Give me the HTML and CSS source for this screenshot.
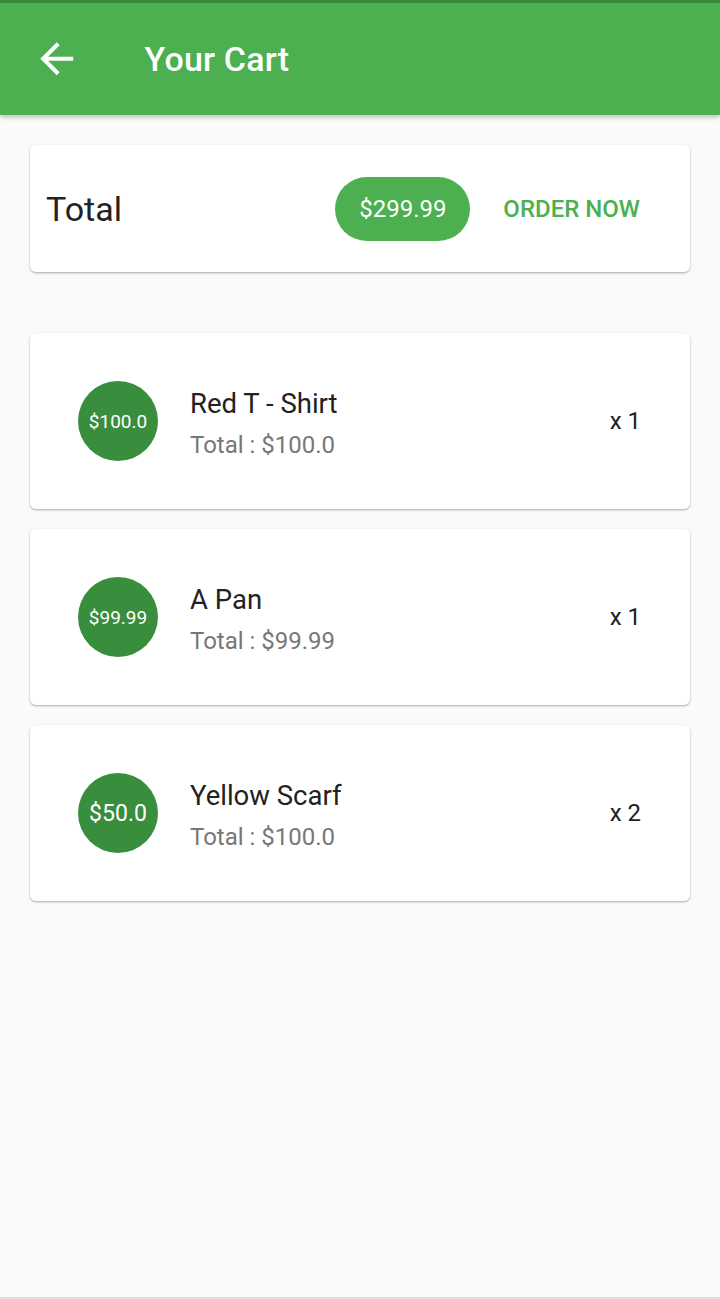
FILE: index.html
```html
<!DOCTYPE html>
<html lang="en">
<head>
<meta charset="utf-8">
<title>Your Cart</title>
<link rel="stylesheet" href="styles.css">
</head>
<body>
<div class="page">
  <div class="status-line"></div>
  <header class="appbar">
    <svg class="back" viewBox="0 0 24 24" aria-hidden="true">
      <path d="M20 11H7.83l5.59-5.59L12 4l-8 8 8 8 1.41-1.41L7.83 13H20v-2z" fill="#fff"/>
    </svg>
    <h1 class="title">Your Cart</h1>
  </header>
  <main class="content">
    <section class="card total-card">
      <span class="total-label">Total</span>
      <span class="chip">$299.99</span>
      <button class="order-btn">ORDER NOW</button>
    </section>

    <ul class="items">
      <li class="card item">
        <div class="avatar"><span class="avatar-text size-6">$100.0</span></div>
        <div class="item-info">
          <div class="item-title">Red T - Shirt</div>
          <div class="item-sub">Total : $100.0</div>
        </div>
        <div class="qty">x 1</div>
      </li>
      <li class="card item">
        <div class="avatar"><span class="avatar-text size-6">$99.99</span></div>
        <div class="item-info">
          <div class="item-title">A Pan</div>
          <div class="item-sub">Total : $99.99</div>
        </div>
        <div class="qty">x 1</div>
      </li>
      <li class="card item">
        <div class="avatar"><span class="avatar-text size-5">$50.0</span></div>
        <div class="item-info">
          <div class="item-title">Yellow Scarf</div>
          <div class="item-sub">Total : $100.0</div>
        </div>
        <div class="qty">x 2</div>
      </li>
    </ul>
  </main>
  <div class="bottom-edge"></div>
</div>
</body>
</html>
```

FILE: styles.css
```css
* { box-sizing: border-box; }

html, body {
  margin: 0;
  padding: 0;
  background: #fafafa;
  font-family: Roboto, "Noto Sans", "Liberation Sans", sans-serif;
  color: #212121;
}

.page {
  min-height: 1299px;
  display: flex;
  flex-direction: column;
}

.status-line {
  height: 3px;
  background: #3b8c3f;
}

.appbar {
  height: 112px;
  background: #4caf50;
  display: flex;
  align-items: center;
  padding-left: 32px;
  box-shadow: 0 2px 5px rgba(0, 0, 0, 0.26);
  position: relative;
  z-index: 1;
}

.back {
  width: 49.5px;
  height: 49.5px;
  display: block;
}

.title {
  margin: 0 0 0 63px;
  font-size: 34px;
  font-weight: 500;
  color: #fff;
  letter-spacing: 0.2px;
}

.content {
  flex: 1;
  padding: 30px 30px 0;
}

.card {
  background: #fff;
  border-radius: 6px;
  box-shadow: 0 1px 2px rgba(0, 0, 0, 0.22), 0 1px 3px rgba(0, 0, 0, 0.12);
}

.total-card {
  height: 127px;
  display: flex;
  align-items: center;
  padding: 0 50px 0 16px;
}

.total-label {
  flex: 1;
  font-size: 34px;
  color: #222;
}

.chip {
  height: 64px;
  width: 135px;
  border-radius: 32px;
  background: #4caf50;
  color: #fff;
  font-size: 24px;
  display: flex;
  align-items: center;
  justify-content: center;
  margin-right: 33px;
}

.order-btn {
  border: 0;
  background: none;
  padding: 0;
  font-family: inherit;
  font-size: 24px;
  font-weight: 500;
  color: #4caf50;
}

.items {
  list-style: none;
  margin: 61px 0 0;
  padding: 0;
  display: flex;
  flex-direction: column;
  gap: 20px;
}

.item {
  height: 176px;
  display: flex;
  align-items: center;
  padding: 0 49px 0 48px;
}

.avatar {
  width: 80px;
  height: 80px;
  border-radius: 50%;
  background: #388e3c;
  display: flex;
  align-items: center;
  justify-content: center;
  flex-shrink: 0;
}

.avatar-text {
  color: #fff;
  white-space: nowrap;
}

.size-6 { font-size: 19px; }
.size-5 { font-size: 23px; }

.item-info {
  flex: 1;
  margin-left: 32px;
  padding-top: 4px;
  display: flex;
  flex-direction: column;
}

.item-title {
  font-size: 27.5px;
  line-height: 40px;
  color: #222;
}

.item-sub {
  font-size: 24px;
  line-height: 34px;
  margin-top: 4px;
  color: #777;
}

.qty {
  font-size: 24px;
  color: #222;
}

.bottom-edge {
  height: 2px;
  background: #e2e2e2;
  border-top: 1px solid #dcdcdc;
}
```
